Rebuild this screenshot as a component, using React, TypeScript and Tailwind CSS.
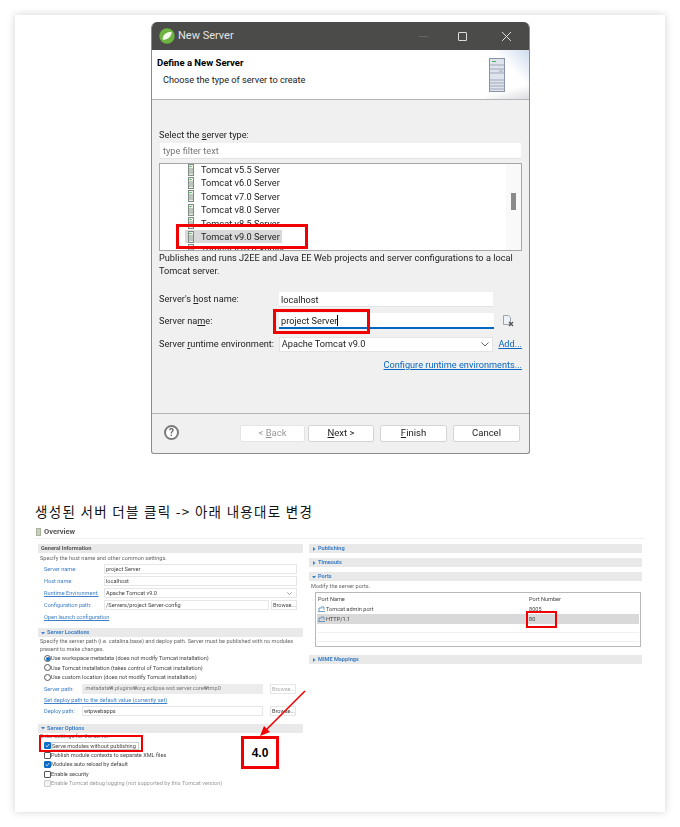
import type { ReactNode } from "react";

const tomcats = ["Tomcat v5.5 Server", "Tomcat v6.0 Server", "Tomcat v7.0 Server", "Tomcat v8.0 Server", "Tomcat v8.5 Server", "Tomcat v9.0 Server", "Tomcat v10.0 Server"];

function ServerGlyph() {
  return (
    <svg width="6" height="12" viewBox="0 0 6 12" className="shrink-0">
      <rect x="0.5" y="0.5" width="5" height="11" fill="#eef0e4" stroke="#7d8a86" />
      <rect x="1.5" y="2" width="2" height="1" fill="#3aa655" />
      <path d="M1 5h4M1 7h4M1 9h4" stroke="#8d9a96" />
    </svg>
  );
}

function BigServer() {
  return (
    <svg width="16" height="34" viewBox="0 0 16 34">
      <rect x="0.5" y="0.5" width="15" height="33" fill="#dfe3ec" stroke="#8b93a8" />
      <rect x="3" y="3" width="4" height="1" fill="#49b060" />
      <path d="M1 7h14M1 11h14M1 15h14M10 13h4M1 22h14M1 25h14M1 28h14M1 31h14" stroke="#9fa7ba" />
    </svg>
  );
}

function DialogButton({ children, className = "" }: { children: ReactNode; className?: string }) {
  return (
    <div className={`h-[17px] flex items-center justify-center rounded-[2px] bg-white border border-[#d4d4d4] text-[9.5px] text-[#222] ${className}`}>
      <span>{children}</span>
    </div>
  );
}

function Dialog() {
  return (
    <div className="w-[379px] h-[432px] ml-[136px] flex flex-col rounded-t-[6px] rounded-b-[3px] border border-[#8c8c8c] border-t-0 bg-[#f0f0f0] overflow-hidden text-[9.2px] text-[#222] blur-[0.3px]">
      <div className="h-[28px] shrink-0 bg-[#4b4b49] flex items-center pl-[7px] pr-[17px]">
        <svg width="16" height="16" viewBox="0 0 15 15">
          <circle cx="7.5" cy="7.5" r="7.2" fill="#6db33f" />
          <path d="M3.5 11C3 6.5 7 3.5 12 3.5 11.5 8.5 8 11 3.5 11Z" fill="#f4f8ef" />
        </svg>
        <span className="ml-[3px] mt-px text-[11px] text-[#e4e4e4]">New Server</span>
        <div className="ml-auto w-[9px] h-px bg-[#666664] mr-[30px]" />
        <div className="w-[9px] h-[9px] border border-[#ddd] rounded-[1px] mr-[34px]" />
        <svg width="11" height="11" viewBox="0 0 11 11">
          <path d="M1 1l9 9M10 1l-9 9" stroke="#ddd" strokeWidth="1" />
        </svg>
      </div>
      <div className="h-[50px] shrink-0 relative bg-white border-b border-[#b5b5b5] pl-[5px] pt-[5px]">
        <div className="h-[15px] font-bold text-[9.5px] leading-[15px] text-black">Define a New Server</div>
        <div className="h-[18px] pl-[6px] pt-[3px] leading-[14px]">Choose the type of server to create</div>
        <div className="absolute right-0 top-0 h-full w-[44px] bg-[linear-gradient(225deg,#cfdcef_0%,transparent_40%),linear-gradient(165deg,transparent_75%,#dcdce2_100%)]" />
        <div className="absolute right-[24px] top-[8px]">
          <BigServer />
        </div>
      </div>
      <div className="flex-1 px-[7px] pt-[28px]">
        <div className="h-[14px] leading-[14px]">Select the <u>s</u>erver type:</div>
        <div className="h-[16px] mt-px bg-white pl-[3px] leading-[15px] text-[#777] mx-[1px] border-b border-[#e2e2e2]">type filter text</div>
        <div className="h-[88px] mt-[4px] relative bg-white border border-[#a6a6a6] overflow-hidden">
          <div className="-mt-[1px] pl-[28px] flex flex-col">
            {tomcats.map((name, i) => (
              <div key={name} className={`h-[13.4px] flex items-center gap-[7px] ${i === 5 ? "bg-[#d9d9d9] -ml-[3px] pl-[3px] w-[97px]" : ""}`}>
                <ServerGlyph />
                <span className="leading-none whitespace-nowrap">{name}</span>
              </div>
            ))}
          </div>
          <div className="absolute right-0 top-0 bottom-0 w-[15px] bg-[#f9f9f9]">
            <div className="absolute left-[5px] top-[29px] w-[5px] h-[17px] bg-[#8a8a8a]" />
          </div>
        </div>
        <p className="mt-0 h-[26px] w-[362px] leading-[13px]">
          Publishes and runs J2EE and Java EE Web projects and server configurations to a local Tomcat server.
        </p>
        <div className="mt-[14px] h-[16px] flex items-center">
          <span className="w-[120px]">Server's <u>h</u>ost name:</span>
          <div className="w-[214px] h-[15px] bg-white pl-[2px] leading-[15px] border-b border-[#e4e4e4]">localhost</div>
        </div>
        <div className="mt-[6px] h-[16px] flex items-center">
          <span className="w-[120px]">Server na<u>m</u>e:</span>
          <div className="w-[215px] h-[16px] bg-white pl-[2px] leading-[15px] border-b-2 border-[#0067c0]">project Server<span className="border-l border-black" /></div>
          <svg width="12" height="12" viewBox="0 0 12 12" className="ml-[8px]">
            <path d="M1.5.5h5l2 2v7h-7Z" fill="#eef1f6" stroke="#9aa3ae" />
            <path d="M7 7l4 4M11 7l-4 4" stroke="#555" strokeWidth="1.4" />
          </svg>
        </div>
        <div className="mt-[7px] h-[16px] flex items-center">
          <span className="w-[120px] whitespace-nowrap">Server <u>r</u>untime environment:</span>
          <div className="w-[215px] h-[15px] bg-white pl-[2px] pr-[3px] border border-[#e4e4e4] flex items-center justify-between">
            <span>Apache Tomcat v9.0</span>
            <svg width="8" height="5" viewBox="0 0 8 5"><path d="M.5.5L4 4 7.5.5" fill="none" stroke="#666" /></svg>
          </div>
          <span className="ml-[5px] text-[#0a66c2] underline">Add...</span>
        </div>
        <div className="mt-[6px] h-[14px] leading-[14px] text-right text-[#0a66c2] underline">Configure runtime environments...</div>
      </div>
      <div className="h-[40px] shrink-0 border-t border-[#b5b5b5] flex items-start pt-[11px] pl-[12px]">
        <div className="w-[15px] h-[15px] rounded-full border-2 border-[#7a7a7a] bg-white flex items-center justify-center text-[10px] font-bold text-[#666] leading-none">?</div>
        <DialogButton className="ml-[61px] w-[65px] text-[#999] bg-[#f6f6f6] border-[#e4e4e4]">&lt; <u>B</u>ack</DialogButton>
        <DialogButton className="ml-[3px] w-[66px]"><u>N</u>ext &gt;</DialogButton>
        <DialogButton className="ml-[6px] w-[67px] border-[#3f8fd0]"><u>F</u>inish</DialogButton>
        <DialogButton className="ml-[6px] w-[67px]">Cancel</DialogButton>
      </div>
    </div>
  );
}

function SectionBar({ title, open = true, plain = false }: { title: string; open?: boolean; plain?: boolean }) {
  return (
    <div className="h-[9px] bg-[#e9e9e9] flex items-center pl-[3px] font-bold leading-none text-[5.6px]">
      {!plain && (
        <svg width="4" height="4" viewBox="0 0 4 4" className="mr-[2px]">
          <path d={open ? "M0 1h4L2 3.5Z" : "M1 0l2.5 2L1 4Z"} fill="#3d7fc4" />
        </svg>
      )}
      <span className={plain ? "text-[#555]" : "text-[#3d7fc4]"}>{title}</span>
    </div>
  );
}

function Field({ label, link = false, children }: { label: string; link?: boolean; children: ReactNode }) {
  return (
    <div className="h-[12px] flex items-center pl-[6px]">
      <span className={`w-[60px] text-[#3d7fc4] whitespace-nowrap ${link ? "underline" : ""}`}>{label}</span>
      {children}
    </div>
  );
}

function Box({ children, className = "" }: { children?: ReactNode; className?: string }) {
  return <div className={`h-[10px] bg-white border border-[#e6e6e6] pl-[1px] leading-[8px] whitespace-nowrap ${className}`}>{children}</div>;
}

function Radio({ on = false, label }: { on?: boolean; label: string }) {
  return (
    <div className="h-[9.3px] flex items-center pl-[6px]">
      <div className="w-[7px] h-[7px] rounded-full border border-[#555] bg-white flex items-center justify-center">
        {on && <div className="w-[4px] h-[4px] rounded-full bg-[#0a6cc4]" />}
      </div>
      <span className="whitespace-nowrap">{label}</span>
    </div>
  );
}

function Check({ on = false, off = false, focus = false, label }: { on?: boolean; off?: boolean; focus?: boolean; label: string }) {
  return (
    <div className={`h-[9.5px] flex items-center pl-[6px] ${off ? "text-[#999]" : ""}`}>
      <div className={`w-[7px] h-[7px] rounded-[1px] border flex items-center justify-center ${on ? "bg-[#0a6cc4] border-[#0a6cc4]" : off ? "bg-[#f3f3f3] border-[#ccc]" : "bg-white border-[#555]"}`}>
        {on && <svg width="5" height="5" viewBox="0 0 5 5"><path d="M.7 2.5l1.3 1.3L4.3 1" fill="none" stroke="#fff" strokeWidth=".8" /></svg>}
      </div>
      <span className={`whitespace-nowrap ${focus ? "border border-[#cfcfcf] pr-[2px] leading-[6px]" : ""}`}>{label}</span>
    </div>
  );
}

function PortIcon() {
  return (
    <svg width="7" height="6" viewBox="0 0 7 6" className="mr-[1px] shrink-0">
      <path d="M1 5V2h3M3 1h3v3M0 5.5h7" fill="none" stroke="#4a86b8" strokeWidth=".8" />
    </svg>
  );
}

function Overview() {
  return (
    <div className="ml-[19px] mt-[5px] w-[611px] text-[5.6px] text-[#444] blur-[0.3px]">
      <div className="h-[14px] border-b border-[#eee] flex items-center pl-[2px]">
        <svg width="5" height="8" viewBox="0 0 5 8" className="mr-[3px]">
          <rect width="5" height="8" fill="#a9b29a" />
          <path d="M1 2h3M1 4h3M1 6h3" stroke="#e9ecdf" />
        </svg>
        <span className="font-bold text-[7.5px] text-[#555]">Overview</span>
      </div>
      <div className="flex gap-[6px] pl-[4px] pt-[5px]">
        <div className="w-[265px] shrink-0">
          <SectionBar title="General Information" plain />
          <div className="h-[10px] pl-[2px] leading-[10px] text-[#666]">Specify the host name and other common settings.</div>
          <Field label="Server name:"><Box className="w-[193px]">project Server</Box></Field>
          <Field label="Host name:"><Box className="w-[193px]">localhost</Box></Field>
          <Field label="Runtime Environment:" link>
            <Box className="w-[193px] flex items-center justify-between pr-[4px]">
              <span>Apache Tomcat v9.0</span>
              <svg width="5" height="3" viewBox="0 0 5 3"><path d="M.3.3L2.5 2.5 4.7.3" fill="none" stroke="#666" strokeWidth=".6" /></svg>
            </Box>
          </Field>
          <Field label="Configuration path:">
            <Box className="w-[165px]">/Servers/project Server-config</Box>
            <Box className="w-[26px] ml-[2px] pl-0 text-center">Browse...</Box>
          </Field>
          <div className="h-[12px] pl-[6px] leading-[12px] text-[#3d7fc4] underline">Open launch configuration</div>
          <div className="h-[5px]" />
          <SectionBar title="Server Locations" />
          <p className="pl-[2px] leading-[8px] h-[16px] text-[#666]">
            Specify the server path (i.e. catalina.base) and deploy path. Server must be published with no modules present to make changes.
          </p>
          <div className="h-[1px]" />
          <Radio on label="Use workspace metadata (does not modify Tomcat installation)" />
          <Radio label="Use Tomcat installation (takes control of Tomcat installation)" />
          <Radio label="Use custom location (does not modify Tomcat installation)" />
          <div className="h-[1px]" />
          <div className="h-[12px] flex items-center pl-[6px]">
            <span className="w-[38px] text-[#3d7fc4]">Server path:</span>
            <div className="w-[181px] h-[10px] bg-[#ececec] pl-[2px] leading-[9px] text-[#777] whitespace-nowrap">.metadata₩.plugins₩org.eclipse.wst.server.core₩tmp0</div>
            <Box className="w-[26px] ml-[7px] pl-0 text-center text-[#aaa]">Browse...</Box>
          </div>
          <div className="h-[10px] pl-[6px] leading-[10px] text-[#3d7fc4] underline">Set deploy path to the default value (currently set)</div>
          <div className="h-[12px] flex items-center pl-[6px]">
            <span className="w-[38px] text-[#3d7fc4]">Deploy path:</span>
            <Box className="w-[181px]">wtpwebapps</Box>
            <Box className="w-[26px] ml-[7px] pl-0 text-center">Browse...</Box>
          </div>
          <div className="h-[7px]" />
          <SectionBar title="Server Options" />
          <div className="h-[8px] pl-[2px] leading-[7px] text-[#666]">Enter settings for the server.</div>
          <Check on focus label="Serve modules without publishing" />
          <Check label="Publish module contexts to separate XML files" />
          <Check on label="Modules auto reload by default" />
          <Check label="Enable security" />
          <Check off label=" Enable Tomcat debug logging (not supported by this Tomcat version)" />
        </div>
        <div className="w-[333px]">
          <SectionBar title="Publishing" open={false} />
          <div className="h-[5px]" />
          <SectionBar title="Timeouts" open={false} />
          <div className="h-[5px]" />
          <SectionBar title="Ports" />
          <div className="h-[9px] pl-[2px] leading-[8px] text-[#666] pt-[1px]">Modify the server ports.</div>
          <div className="ml-[6px] mt-[2px] w-[326px] h-[55px] border border-[#b8b8b8] p-px bg-white">
            <div className="h-[10px] flex items-center">
              <span className="w-[212px] pl-[1px]">Port Name</span>
              <span>Port Number</span>
            </div>
            <div className="h-[10px] flex items-center pt-px">
              <span className="w-[212px] pl-px flex items-center"><PortIcon />Tomcat admin port</span>
              <span>8005</span>
            </div>
            <div className="h-[10px] flex items-center bg-[#d9d9d9]">
              <span className="w-[212px] pl-px flex items-center"><PortIcon />HTTP/1.1</span>
              <span>80</span>
            </div>
            <div className="h-[9px] border-b border-[#f0f0f0]" />
            <div className="h-[9px] border-b border-[#f0f0f0]" />
          </div>
          <div className="h-[8px]" />
          <SectionBar title="MIME Mappings" open={false} />
        </div>
      </div>
    </div>
  );
}

export default function App() {
  return (
    <div className="w-[680px] h-[827px] bg-white pt-[15px] px-[15px] font-['Roboto','Noto_Sans_CJK_KR',sans-serif]">
      <div className="relative w-[650px] h-[797px] pt-[7px] bg-white shadow-[0_0_8px_rgba(0,0,0,0.18)] overflow-hidden">
        <Dialog />
        <div className="mt-[48px] ml-[20px] h-[18px] leading-[18px] text-[13.5px] tracking-[1.3px] text-[#111] font-['Noto_Sans_CJK_KR',sans-serif]">
          생성된 서버 더블 클릭 -&gt; 아래 내용대로 변경
        </div>
        <Overview />

        {/* red annotations over the screenshots */}
        <div className="absolute left-[161px] top-[209px] w-[132px] h-[25px] border-[3px] border-[#f00000]" />
        <div className="absolute left-[258px] top-[294px] w-[97px] h-[25px] border-[3px] border-[#f00000]" />
        <div className="absolute left-[24px] top-[720px] w-[104px] h-[17px] border-2 border-[#f00000]" />
        <div className="absolute left-[511px] top-[596px] w-[31px] h-[17px] border-2 border-[#f00000]" />
        <div className="absolute left-[226px] top-[721px] w-[38px] h-[33px] border-[3px] border-[#f00000] bg-white flex items-center justify-center font-['Liberation_Sans',sans-serif] font-bold text-[12px] text-black">4.0</div>
        <svg className="absolute left-[240px] top-[672px]" width="56" height="52" viewBox="0 0 56 52">
          <path d="M50 4L10 44" stroke="#f00000" strokeWidth="1.6" />
          <path d="M5 49L9 39L15 45Z" fill="#f00000" />
        </svg>
      </div>
    </div>
  );
}
